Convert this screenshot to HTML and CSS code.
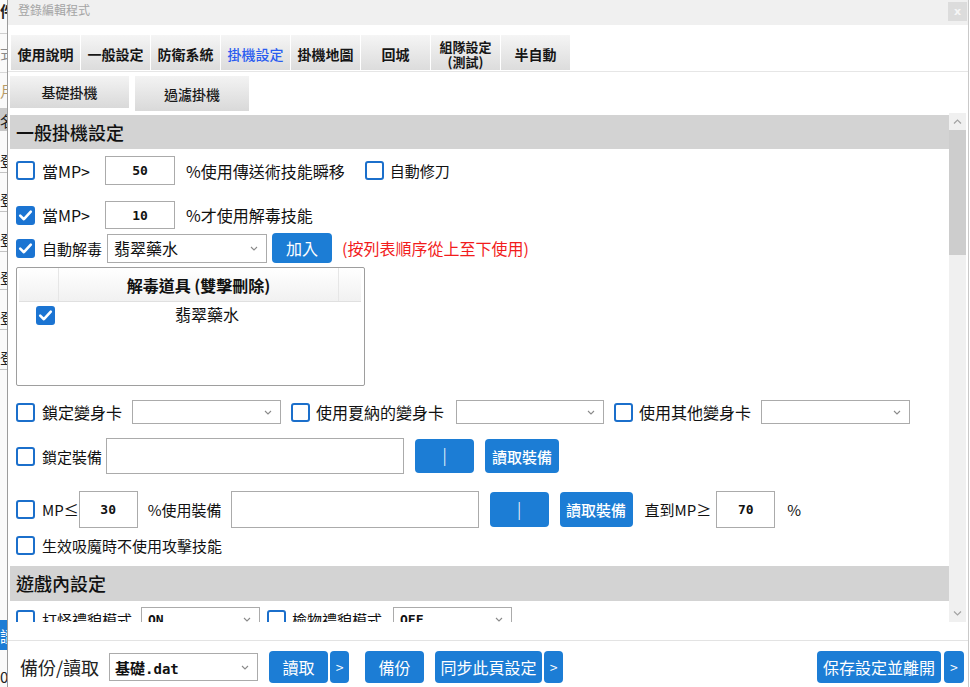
FILE: index.html
```html
<!DOCTYPE html>
<html lang="zh-Hant">
<head>
<meta charset="utf-8">
<title>登錄編輯程式</title>
<link rel="stylesheet" href="styles.css">
</head>
<body>
<div class="desk">
  <!-- sliver of the window behind -->
  <div class="behind">
    <div class="bk bk-top">件</div>
    <div class="bk bk-sep">式</div>
    <div class="bk bk-amber">月</div>
    <div class="bk bk-grey">名</div>
    <div class="bk bk-cell c1">登</div>
    <div class="bk bk-cell c2">登</div>
    <div class="bk bk-cell c3">登</div>
    <div class="bk bk-cell c4">登</div>
    <div class="bk bk-cell c5">登</div>
    <div class="bk bk-cell c6">登</div>
    <div class="bk-fill"></div>
    <div class="bk bk-blue">讀</div>
    <div class="bk bk-zero">0</div>
  </div>

  <div class="win">
    <div class="titlebar">
      <span class="title">登錄編輯程式</span>
      <span class="close">x</span>
    </div>

    <div class="tabs">
      <div class="tab">使用說明</div>
      <div class="tab">一般設定</div>
      <div class="tab">防衛系統</div>
      <div class="tab active">掛機設定</div>
      <div class="tab">掛機地圖</div>
      <div class="tab">回城</div>
      <div class="tab two">組隊設定<br>(測試)</div>
      <div class="tab">半自動</div>
    </div>
    <div class="rule"></div>

    <div class="subtabs">
      <div class="subtab st1">基礎掛機</div>
      <div class="subtab st2">過濾掛機</div>
    </div>

    <div class="scrollwrap">
      <div class="content">
        <div class="sec-head">一般掛機設定</div>

        <div class="row r1">
          <span class="cb"></span>
          <span class="lbl">當MP&gt;</span>
          <span class="num n1">50</span>
          <span class="lbl t1">%使用傳送術技能瞬移</span>
          <span class="cb cb-r1"></span>
          <span class="lbl t1b">自動修刀</span>
        </div>

        <div class="row r2">
          <span class="cb on"><svg viewBox="0 0 19 19"><path d="M4.2 9.6 L7.9 13.2 L14.8 5.6"/></svg></span>
          <span class="lbl">當MP&gt;</span>
          <span class="num n2">10</span>
          <span class="lbl t2">%才使用解毒技能</span>
        </div>

        <div class="row r3">
          <span class="cb on"><svg viewBox="0 0 19 19"><path d="M4.2 9.6 L7.9 13.2 L14.8 5.6"/></svg></span>
          <span class="lbl sm">自動解毒</span>
          <span class="sel s-potion"><span class="sel-text">翡翠藥水</span><svg class="chev" viewBox="0 0 8 5"><path d="M1 1 L4 4 L7 1"/></svg></span>
          <span class="btn b-add">加入</span>
          <span class="note">(按列表順序從上至下使用)</span>
        </div>

        <div class="list">
          <div class="list-head">
            <div class="lh c-a"></div>
            <div class="lh c-b">解毒道具 (雙擊刪除)</div>
            <div class="lh c-c"></div>
          </div>
          <div class="list-row">
            <span class="cb on"><svg viewBox="0 0 19 19"><path d="M4.2 9.6 L7.9 13.2 L14.8 5.6"/></svg></span>
            <span class="list-item">翡翠藥水</span>
          </div>
        </div>

        <div class="row r4">
          <span class="cb"></span>
          <span class="lbl">鎖定變身卡</span>
          <span class="sel s-card s-card1"><span></span><svg class="chev" viewBox="0 0 8 5"><path d="M1 1 L4 4 L7 1"/></svg></span>
          <span class="cb cb-r4"></span>
          <span class="lbl t4">使用夏納的變身卡</span>
          <span class="sel s-card s-card2"><span></span><svg class="chev" viewBox="0 0 8 5"><path d="M1 1 L4 4 L7 1"/></svg></span>
          <span class="cb cb-r4b"></span>
          <span class="lbl t4">使用其他變身卡</span>
          <span class="sel s-card s-card3"><span></span><svg class="chev" viewBox="0 0 8 5"><path d="M1 1 L4 4 L7 1"/></svg></span>
        </div>

        <div class="row r5">
          <span class="cb"></span>
          <span class="lbl sm">鎖定裝備</span>
          <span class="field f-lock"></span>
          <span class="btn b-bar">|</span>
          <span class="btn b-read">讀取裝備</span>
        </div>

        <div class="row r6">
          <span class="cb"></span>
          <span class="lbl sm">MP≤</span>
          <span class="num n3">30</span>
          <span class="lbl sm t6">%使用裝備</span>
          <span class="field f-equip"></span>
          <span class="btn b-bar b-bar6">|</span>
          <span class="btn b-read b-read6">讀取裝備</span>
          <span class="lbl sm t6b">直到MP≥</span>
          <span class="num n4">70</span>
          <span class="lbl sm t6c">%</span>
        </div>

        <div class="row r7">
          <span class="cb"></span>
          <span class="lbl sm">生效吸魔時不使用攻擊技能</span>
        </div>

        <div class="sec-head sec2">遊戲內設定</div>

        <div class="row r8">
          <span class="cb"></span>
          <span class="lbl sm">打怪禮貌模式</span>
          <span class="sel s-mode s-mode1"><span class="mono">ON</span><svg class="chev" viewBox="0 0 8 5"><path d="M1 1 L4 4 L7 1"/></svg></span>
          <span class="cb cb-r8"></span>
          <span class="lbl sm t8">檢物禮貌模式</span>
          <span class="sel s-mode s-mode2"><span class="mono">OFF</span><svg class="chev" viewBox="0 0 8 5"><path d="M1 1 L4 4 L7 1"/></svg></span>
        </div>
      </div>

      <div class="vscroll">
        <div class="arrow"><svg viewBox="0 0 9 5"><path d="M1 4.5 L4.5 1 L8 4.5"/></svg></div>
        <div class="thumb"></div>
        <div class="track"></div>
        <div class="arrow"><svg viewBox="0 0 9 5"><path d="M1 0.5 L4.5 4 L8 0.5"/></svg></div>
      </div>
    </div>

    <div class="footer">
      <span class="f-lbl">備份/讀取</span>
      <span class="sel s-file"><span class="file-name">基礎<span class="mono">.dat</span></span><svg class="chev" viewBox="0 0 8 5"><path d="M1 1 L4 4 L7 1"/></svg></span>
      <span class="btn fb fb-load">讀取</span>
      <span class="btn fb more">&gt;</span>
      <span class="btn fb fb-backup">備份</span>
      <span class="btn fb fb-sync">同步此頁設定</span>
      <span class="btn fb more">&gt;</span>
      <span class="f-gap"></span>
      <span class="btn fb fb-save">保存設定並離開</span>
      <span class="btn fb more more-end">&gt;</span>
    </div>
  </div>
</div>
</body>
</html>
```

FILE: styles.css
```css
* { box-sizing: border-box; }

html, body {
  margin: 0;
  padding: 0;
}

body {
  width: 970px;
  height: 687px;
  overflow: hidden;
  background: #fff;
  font-family: "Noto Sans CJK TC", "Noto Sans", sans-serif;
  color: #111;
}

.desk {
  display: flex;
  height: 687px;
}

/* ---- window behind ---- */
.behind {
  width: 7px;
  flex: none;
  overflow: hidden;
  background: #fafafa;
  display: flex;
  flex-direction: column;
  font-size: 15px;
  line-height: 1;
}

.bk {
  flex: none;
  white-space: nowrap;
  display: flex;
  align-items: flex-end;
  padding-bottom: 3px;
  color: #222;
}

.bk-top { height: 33px; font-weight: bold; align-items: flex-start; padding-top: 3px; }
.bk-sep { height: 39px; border-top: 1px solid #cfcfcf; color: #8a8a8a; padding-bottom: 12px; }
.bk-amber { height: 36px; color: #b79a66; border-top: 1px solid #d8d8d8; padding-bottom: 10px; }
.bk-grey { height: 23px; background: #c9c9c9; }
.bk-cell { border-bottom: 1px solid #c3c3c3; padding-bottom: 4px; }
.c1 { height: 42px; }
.c2 { height: 39px; }
.c3 { height: 40px; }
.c4 { height: 38px; }
.c5 { height: 40px; }
.c6 { height: 40px; }
.bk-fill { flex: 1; }
.bk-blue { height: 30px; background: #1c7cd5; color: #fff; padding-bottom: 7px; }
.bk-zero { height: 37px; padding-bottom: 3px; }

/* ---- main window ---- */
.win {
  width: 962px;
  flex: none;
  height: 687px;
  border-left: 1px solid #9c9c9c;
  border-right: 1px solid #c9c9c9;
  display: flex;
  flex-direction: column;
}

.titlebar {
  height: 25px;
  flex: none;
  background: #f0f0f0;
  display: flex;
  justify-content: space-between;
  align-items: flex-start;
}

.title {
  padding: 2px 0 0 10px;
  font-size: 12px;
  line-height: 16px;
  color: #a4a4a4;
}

.close {
  margin: 2px 1px 0 0;
  width: 19px;
  height: 19px;
  background: #dcdcdc;
  color: #f6f6f6;
  font-family: "DejaVu Sans", sans-serif;
  font-size: 11px;
  font-weight: bold;
  display: flex;
  align-items: center;
  justify-content: center;
}

/* ---- tab strip ---- */
.tabs {
  margin-top: 10px;
  padding-left: 3px;
  height: 35px;
  flex: none;
  display: flex;
  gap: 1px;
}

.tab {
  width: 69px;
  height: 35px;
  background: linear-gradient(#f5f5f5, #dcdcdc);
  display: flex;
  align-items: center;
  justify-content: center;
  text-align: center;
  font-size: 14px;
  font-weight: bold;
  color: #161616;
  padding-top: 2px;
}

.tab.active {
  color: #2a5cf0;
  font-weight: 500;
}

.tab.two {
  font-size: 13px;
  line-height: 15px;
  padding-top: 3px;
}

.rule {
  margin-top: 1px;
  height: 1px;
  flex: none;
  background: #e6e6e6;
}

.subtabs {
  margin-top: 4px;
  padding-left: 2px;
  height: 35px;
  flex: none;
  display: flex;
  align-items: flex-start;
  gap: 6px;
}

.subtab {
  background: linear-gradient(#f3f3f3, #d9d9d9);
  display: flex;
  align-items: center;
  justify-content: center;
  font-size: 14px;
  font-weight: 500;
  color: #1a1a1a;
}

.st1 { width: 119px; height: 32px; }
.st2 { width: 114px; height: 35px; }

/* ---- scrolling settings panel ---- */
.scrollwrap {
  margin: 2px 0 0 2px;
  height: 509px;
  flex: none;
  display: flex;
}

.content {
  width: 939px;
  height: 509px;
  overflow: hidden;
  padding-top: 2px;
  display: flex;
  flex-direction: column;
}

.sec-head {
  height: 34px;
  flex: none;
  background: #d3d3d3;
  padding-left: 6px;
  font-size: 18px;
  font-weight: 500;
  line-height: 34px;
  color: #111;
}

.sec2 {
  margin-top: 12px;
  height: 35px;
  line-height: 35px;
}

.row {
  flex: none;
  display: flex;
  align-items: center;
  padding-left: 6px;
}

.r1 { margin-top: 7px; height: 29px; }
.r2 { margin-top: 16px; height: 28px; }
.r3 { margin-top: 4px; height: 30px; }
.r4 { margin-top: 14px; height: 24px; }
.r5 { margin-top: 14px; height: 36px; }
.r6 { margin-top: 17px; height: 37px; }
.r7 { margin-top: 8px; height: 18px; }
.r8 { margin-top: 6px; height: 24px; }

.cb {
  width: 19px;
  height: 19px;
  flex: none;
  border: 2px solid #1b6fcb;
  border-radius: 3px;
  background: #fff;
  display: flex;
}

.cb.on {
  background: #1b74d2;
  border-color: #1b74d2;
}

.cb svg {
  width: 19px;
  height: 19px;
  margin: -2px;
}

.cb svg path {
  fill: none;
  stroke: #fff;
  stroke-width: 2.6;
  stroke-linecap: round;
  stroke-linejoin: round;
}

.lbl {
  margin-left: 7px;
  font-size: 16px;
  white-space: nowrap;
  color: #111;
}

.lbl.sm { font-size: 15px; }

.num {
  flex: none;
  border: 1px solid #ababab;
  background: #fff;
  display: flex;
  align-items: center;
  justify-content: center;
  font-family: "DejaVu Sans Mono", monospace;
  font-weight: bold;
  font-size: 13px;
  color: #111;
}

.n1 { margin-left: 15px; width: 70px; height: 29px; }
.n2 { margin-left: 15px; width: 70px; height: 28px; }
.n3 { margin-left: 0; width: 59px; height: 37px; }
.n4 { margin-left: 5px; width: 59px; height: 37px; }

.t1 { margin-left: 11px; }
.cb-r1 { margin-left: 20px; }
.t1b { margin-left: 6px; font-size: 15px; }
.t2 { margin-left: 11px; }

.sel {
  flex: none;
  border: 1px solid #ababab;
  background: #fff;
  display: flex;
  align-items: center;
  justify-content: space-between;
  padding: 0 8px 0 6px;
}

.chev {
  width: 8px;
  height: 5px;
  flex: none;
}

.chev path {
  fill: none;
  stroke: #8a8a8a;
  stroke-width: 1.1;
}

.s-potion { margin-left: 5px; width: 160px; height: 29px; font-size: 16px; }
.sel-text { color: #111; }

.btn {
  flex: none;
  background: #1c7dd5;
  border-radius: 4px;
  color: #fff;
  display: flex;
  align-items: center;
  justify-content: center;
  font-size: 16px;
  white-space: nowrap;
}

.b-add { margin-left: 5px; width: 60px; height: 30px; }

.note {
  margin-left: 10px;
  font-size: 16px;
  color: #f21c1c;
  white-space: nowrap;
}

/* ---- antidote list ---- */
.list {
  flex: none;
  margin: 4px 0 0 6px;
  width: 349px;
  height: 119px;
  border: 1px solid #9e9e9e;
  border-radius: 2px;
  padding: 0 3px 0 2px;
}

.list-head {
  height: 34px;
  display: flex;
  background: linear-gradient(#ffffff, #f1f1f1);
  border-bottom: 1px solid #e0e0e0;
}

.lh { height: 100%; }
.c-a { width: 40px; border-right: 1px solid #e6e6e6; }
.c-b {
  width: 280px;
  border-right: 1px solid #e6e6e6;
  display: flex;
  align-items: center;
  justify-content: center;
  font-size: 16px;
  font-weight: bold;
  color: #111;
}
.c-c { flex: 1; }

.list-row {
  margin-top: 4px;
  height: 19px;
  display: flex;
  align-items: center;
}

.list-row .cb { margin-left: 17px; }

.list-item {
  flex: 1;
  text-align: center;
  font-size: 16px;
  line-height: 16px;
  color: #111;
  padding: 0 2px 3px 0;
}

/* ---- lower rows ---- */
.s-card { width: 149px; height: 24px; }
.s-card1 { margin-left: 10px; }
.cb-r4 { margin-left: 10px; }
.t4 { margin-left: 6px; }
.s-card2 { margin-left: 12px; width: 148px; }
.cb-r4b { margin-left: 10px; }
.s-card3 { margin-left: 10px; }

.field {
  flex: none;
  border: 1px solid #ababab;
  background: #fff;
}

.f-lock { margin-left: 4px; width: 298px; height: 36px; }
.f-equip { margin-left: 9px; width: 248px; height: 37px; }

.b-bar {
  margin-left: 11px;
  width: 59px;
  height: 34px;
  font-family: "DejaVu Sans", sans-serif;
  font-size: 17px;
  font-weight: 300;
}

.b-read {
  margin-left: 11px;
  width: 74px;
  height: 34px;
  font-size: 15px;
  font-weight: 500;
}

.b-bar6 { height: 35px; }
.b-read6 { width: 73px; height: 35px; }

.t6 { margin-left: 10px; }
.t6b { margin-left: 12px; }
.t6c { margin-left: 12px; }

.s-mode { width: 119px; height: 24px; }
.s-mode1 { margin-left: 9px; }
.cb-r8 { margin-left: 7px; }
.t8 { margin-left: 6px; }
.s-mode2 { margin-left: 11px; }

.mono {
  font-family: "DejaVu Sans Mono", monospace;
  font-weight: bold;
  font-size: 13px;
  color: #111;
}

/* ---- vertical scrollbar ---- */
.vscroll {
  width: 17px;
  flex: none;
  background: #f0f0f0;
  display: flex;
  flex-direction: column;
}

.arrow {
  height: 17px;
  flex: none;
  display: flex;
  align-items: center;
  justify-content: center;
}

.arrow svg {
  width: 9px;
  height: 5px;
}

.arrow path {
  fill: none;
  stroke: #a3a3a3;
  stroke-width: 1.2;
}

.thumb {
  height: 125px;
  flex: none;
  background: #cdcdcd;
}

.track { flex: 1; }

/* ---- footer ---- */
.footer {
  margin-top: 18px;
  border-top: 1px solid #e3e3e3;
  flex: 1;
  display: flex;
  align-items: center;
  padding: 8px 4px 2px 12px;
}

.f-lbl {
  font-size: 18px;
  color: #222;
  white-space: nowrap;
}

.s-file {
  margin-left: 10px;
  width: 149px;
  height: 28px;
  padding-left: 5px;
}

.file-name {
  font-size: 15px;
  font-weight: bold;
  color: #111;
}

.file-name .mono { font-size: 14px; }

.fb { height: 32px; font-size: 16px; }
.fb-load { margin-left: 11px; width: 59px; }
.more { margin-left: 2px; width: 19px; font-size: 14px; }
.fb-backup { margin-left: 16px; width: 59px; }
.fb-sync { margin-left: 11px; width: 107px; }
.f-gap { flex: 1; }
.fb-save { width: 124px; }
.more-end { margin-left: 3px; width: 20px; }
```
